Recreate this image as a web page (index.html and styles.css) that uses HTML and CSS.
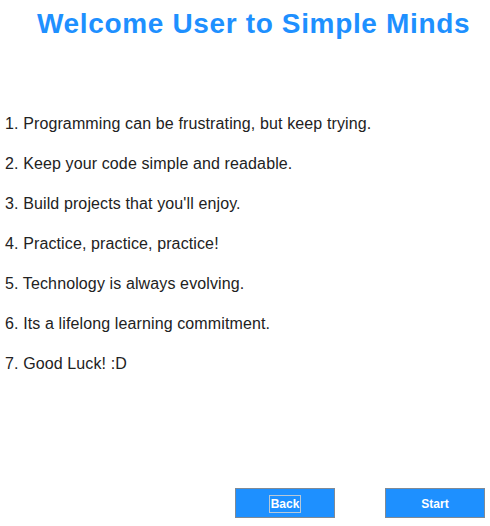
FILE: index.html
```html
<!DOCTYPE html>
<html>
<head>
<meta charset="utf-8">
<link rel="stylesheet" href="styles.css">
</head>
<body>
<div class="app">
  <h1 class="title">Welcome User to Simple Minds</h1>
  <ul class="tips">
    <li>1. Programming can be frustrating, but keep trying.</li>
    <li>2. Keep your code simple and readable.</li>
    <li>3. Build projects that you'll enjoy.</li>
    <li>4. Practice, practice, practice!</li>
    <li>5. Technology is always evolving.</li>
    <li>6. Its a lifelong learning commitment.</li>
    <li>7. Good Luck! :D</li>
  </ul>
  <div class="actions">
    <button class="btn"><span class="focus">Back</span></button>
    <button class="btn">Start</button>
  </div>
</div>
</body>
</html>
```

FILE: styles.css
```css
html, body {
  margin: 0;
  padding: 0;
  background: #ffffff;
}
.app {
  width: 490px;
  height: 526px;
  display: flex;
  flex-direction: column;
}
.title {
  margin: 0;
  padding: 6px 0 0 37px;
  font-family: "Liberation Sans", sans-serif;
  font-weight: bold;
  font-size: 28px;
  line-height: 36px;
  letter-spacing: 0.65px;
  color: #1e90ff;
  white-space: nowrap;
}
.tips {
  list-style: none;
  margin: 0;
  padding: 62px 0 0 5px;
  font-family: "Liberation Sans", sans-serif;
  font-size: 16px;
  letter-spacing: 0.12px;
  line-height: 40px;
  color: #222222;
}
.tips li {
  height: 40px;
}
.actions {
  margin-top: auto;
  display: flex;
  justify-content: flex-end;
  gap: 50px;
  padding: 0 5px 8px 0;
}
.btn {
  width: 100px;
  height: 30px;
  box-sizing: border-box;
  border: 1px solid #7f8a96;
  background: #1e90ff;
  color: #ffffff;
  font-family: "Liberation Sans", sans-serif;
  font-weight: bold;
  font-size: 12px;
  padding: 1px 0 0 0;
  display: flex;
  align-items: center;
  justify-content: center;
}
.focus {
  border: 1px solid #b8c8d8;
  padding: 1px 1px 1px 1px;
  line-height: 14px;
}
```
